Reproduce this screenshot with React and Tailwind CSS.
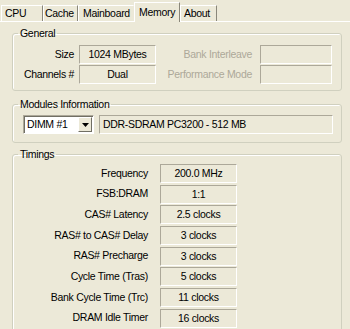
import React from "react";

const boxCls =
  "border border-t-[#aca899] border-l-[#aca899] border-b-white border-r-white bg-[#ece9d8] flex items-center justify-center leading-[13px]";

function Tab({ children, className }) {
  return (
    <div
      className={
        "h-[16px] border-t border-l border-t-white border-l-white border-r border-r-[#8a877a] leading-[14px] whitespace-nowrap " +
        className
      }
    >
      {children}
    </div>
  );
}

function Group({ title, className, children }) {
  return (
    <fieldset
      className={
        "ml-[12px] mr-[8px] border border-[#d0d0bf] rounded-[3px] shadow-[inset_1px_1px_0_#ffffff] " +
        className
      }
    >
      <legend className="ml-[5px] px-[2px] leading-[13px]">{title}</legend>
      {children}
    </fieldset>
  );
}

const timings = [
  ["Frequency", "200.0 MHz"],
  ["FSB:DRAM", "1:1"],
  ["CAS# Latency", "2.5 clocks"],
  ["RAS# to CAS# Delay", "3 clocks"],
  ["RAS# Precharge", "3 clocks"],
  ["Cycle Time (Tras)", "5 clocks"],
  ["Bank Cycle Time (Trc)", "11 clocks"],
  ["DRAM Idle Timer", "16 clocks"],
];

export default function App() {
  return (
    <div className="w-[350px] h-[329px] overflow-hidden bg-[#ece9d8] text-black font-['Liberation_Sans',Arial,sans-serif] text-[10.5px] tracking-[-0.3px]">
      {/* Tab strip */}
      <div className="h-[22px] flex items-end pl-[1px] border-b border-b-white">
        <Tab className="w-[42px] pl-[3px]">CPU</Tab>
        <Tab className="w-[35px] pl-[1px]">Cache</Tab>
        <Tab className="w-[56px] pl-[4px] border-r-transparent">Mainboard</Tab>
        <div className="relative z-10 -mb-[1px] h-[20px] w-[46px] pl-[4px] pt-[2px] bg-[#ece9d8] border-t border-l border-t-white border-l-white border-r border-r-[#8a877a] leading-[14px]">
          Memory
        </div>
        <Tab className="w-[37px] pl-[3px]">About</Tab>
      </div>

      {/* General */}
      <Group title="General" className="mt-[5px] pb-[6px]">
        <div className="pt-[5px] flex flex-col gap-[1px]">
          <div className="flex items-center h-[19px]">
            <div className="w-[61px] text-right">Size</div>
            <div className={boxCls + " ml-[5px] w-[77px] h-[19px]"}>1024 MBytes</div>
            <div className="w-[96px] text-right text-[#aca899]">Bank Interleave</div>
            <div className={boxCls + " ml-[8px] w-[72px] h-[19px]"}></div>
          </div>
          <div className="flex items-center h-[19px]">
            <div className="w-[61px] text-right">Channels #</div>
            <div className={boxCls + " ml-[5px] w-[77px] h-[19px]"}>Dual</div>
            <div className="w-[96px] text-right text-[#aca899]">Performance Mode</div>
            <div className={boxCls + " ml-[8px] w-[72px] h-[19px]"}></div>
          </div>
        </div>
      </Group>

      {/* Modules Information */}
      <Group title="Modules Information" className="mt-[7px] pb-[8px]">
        <div className="pt-[4px] pl-[10px] flex items-center">
          <div className="w-[71px] h-[19px] flex items-center bg-white border border-t-[#aca899] border-l-[#aca899] border-b-white border-r-white shadow-[inset_1px_1px_0_#716f64]">
            <span className="pl-[3px] flex-1 leading-[13px]">DIMM #1</span>
            <div className="w-[14px] h-[15px] mr-[1px] bg-[#ece9d8] border border-t-white border-l-white border-b-[#716f64] border-r-[#716f64] flex items-center justify-center">
              <svg width="7" height="4" viewBox="0 0 7 4">
                <path d="M0 0h7L3.5 4z" fill="#000" />
              </svg>
            </div>
          </div>
          <div className={boxCls + " ml-[5px] w-[234px] h-[19px] !justify-start pl-[3px]"}>
            DDR-SDRAM PC3200 - 512 MB
          </div>
        </div>
      </Group>

      {/* Timings */}
      <Group title="Timings" className="mt-[5px] pb-[8px]">
        <div className="pt-[3px] flex flex-col gap-[1.7px]">
          {timings.map(([label, value]) => (
            <div key={label} className="flex items-center h-[19px]">
              <div className="w-[135px] text-right">{label}</div>
              <div className={boxCls + " ml-[12px] w-[77px] h-[19px]"}>{value}</div>
            </div>
          ))}
        </div>
      </Group>
    </div>
  );
}
